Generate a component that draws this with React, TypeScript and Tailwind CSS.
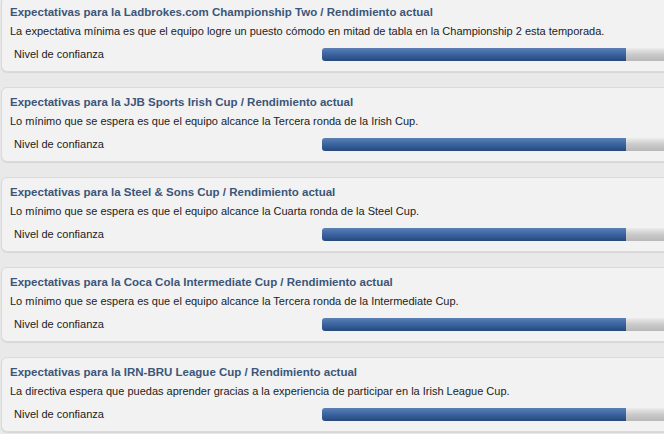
const items = [
  {
    title: "Expectativas para la Ladbrokes.com Championship Two / Rendimiento actual",
    desc: "La expectativa mínima es que el equipo logre un puesto cómodo en mitad de tabla en la Championship 2 esta temporada.",
  },
  {
    title: "Expectativas para la JJB Sports Irish Cup / Rendimiento actual",
    desc: "Lo mínimo que se espera es que el equipo alcance la Tercera ronda de la Irish Cup.",
  },
  {
    title: "Expectativas para la Steel & Sons Cup / Rendimiento actual",
    desc: "Lo mínimo que se espera es que el equipo alcance la Cuarta ronda de la Steel Cup.",
  },
  {
    title: "Expectativas para la Coca Cola Intermediate Cup / Rendimiento actual",
    desc: "Lo mínimo que se espera es que el equipo alcance la Tercera ronda de la Intermediate Cup.",
  },
  {
    title: "Expectativas para la IRN-BRU League Cup / Rendimiento actual",
    desc: "La directiva espera que puedas aprender gracias a la experiencia de participar en la Irish League Cup.",
  },
];

export default function App() {
  return (
    <div className="w-[664px] h-[434px] overflow-hidden bg-[#e9e9e9] font-['Liberation_Sans',Arial,sans-serif]">
      <div className="flex flex-col gap-[15px] -mt-[3px] pl-px">
        {items.map((item, i) => (
          <div
            key={i}
            className="w-[700px] h-[75px] rounded-[6px] bg-[#f2f2f2] border border-[#dadada] shadow-[0_1px_1px_rgba(0,0,0,0.08)] pl-2 pt-[6px]"
          >
            <h3 className="text-[11.5px] leading-[16px] font-bold text-[#3b5679]">{item.title}</h3>
            <p className="mt-[4px] text-[11px] leading-[14px] text-[#222]">{item.desc}</p>
            <div className="mt-[9px] flex items-center">
              <span className="w-[312px] pl-1 text-[11px] leading-[14px] text-[#222]">Nivel de confianza</span>
              {/* confidence bar */}
              <div className="flex h-[13px] w-[360px]">
                <div className="w-[304px] h-full rounded-l-[3px] bg-gradient-to-b from-[#5a80b4] via-[#3a63a0] to-[#27497a]"></div>
                <div className="flex-1 h-full bg-gradient-to-b from-[#ececec] via-[#cacaca] to-[#b8b8b8]"></div>
              </div>
            </div>
          </div>
        ))}
      </div>
    </div>
  );
}
